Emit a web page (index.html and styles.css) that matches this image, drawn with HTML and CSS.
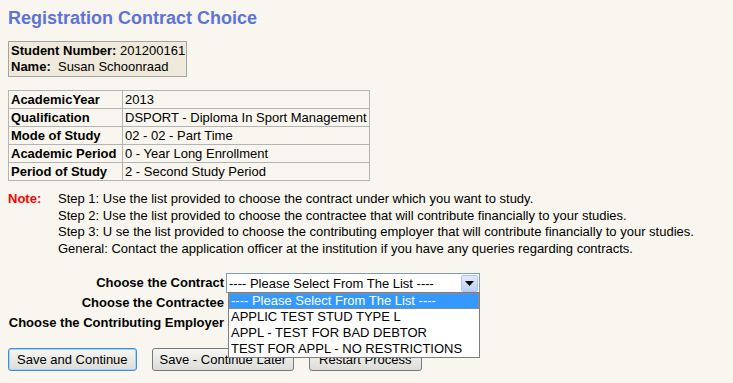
FILE: index.html
```html
<!DOCTYPE html>
<html>
<head>
<meta charset="utf-8">
<link rel="stylesheet" href="styles.css">
</head>
<body>
<h1 class="title">Registration Contract Choice</h1>

<table class="student">
  <tr><td><b>Student Number:</b> 201200161</td></tr>
  <tr><td><b>Name:</b>&nbsp; Susan Schoonraad</td></tr>
</table>

<table class="info">
  <tr><th>AcademicYear</th><td>2013</td></tr>
  <tr><th>Qualification</th><td>DSPORT - Diploma In Sport Management</td></tr>
  <tr><th>Mode of Study</th><td>02 - 02 - Part Time</td></tr>
  <tr><th>Academic Period</th><td>0 - Year Long Enrollment</td></tr>
  <tr><th>Period of Study</th><td>2 - Second Study Period</td></tr>
</table>

<div class="note">
  <div class="note-label">Note:</div>
  <div class="note-text">
    <div>Step 1: Use the list provided to choose the contract under which you want to study.</div>
    <div>Step 2: Use the list provided to choose the contractee that will contribute financially to your studies.</div>
    <div>Step 3: U se the list provided to choose the contributing employer that will contribute financially to your studies.</div>
    <div>General: Contact the application officer at the institution if you have any queries regarding contracts.</div>
  </div>
</div>

<div class="form">
  <div class="label">Choose the Contract</div>
  <div class="field">
    <div class="select">
      <span class="select-text">---- Please Select From The List ----</span>
      <span class="arrow"><svg width="9" height="5" viewBox="0 0 9 5"><path d="M0 0H9L4.5 5Z" fill="#000"/></svg></span>
    </div>
    <div class="dropdown">
      <div class="opt selected">---- Please Select From The List ----</div>
      <div class="opt">APPLIC TEST STUD TYPE L</div>
      <div class="opt">APPL - TEST FOR BAD DEBTOR</div>
      <div class="opt">TEST FOR APPL - NO RESTRICTIONS</div>
    </div>
  </div>
  <div class="label">Choose the Contractee</div>
  <div class="field"></div>
  <div class="label">Choose the Contributing Employer</div>
  <div class="field"></div>
</div>

<div class="buttons">
  <button class="btn primary">Save and Continue</button>
  <button class="btn">Save - Continue Later</button>
  <button class="btn restart">Restart Process</button>
</div>
</body>
</html>
```

FILE: styles.css
```css
html, body {
  margin: 0;
  padding: 0;
}
body {
  background: #f8f6ee;
  font-family: "Liberation Sans", Arial, sans-serif;
  font-size: 13px;
  color: #000;
  padding: 8px;
  width: 717px;
  height: 367px;
  overflow: hidden;
}
.title {
  margin: 0;
  font-size: 18px;
  line-height: 21px;
  font-weight: bold;
  color: #5f72da;
}
.student {
  margin-top: 12px;
  border-collapse: collapse;
  border: 1px solid #a3a3a3;
  background: #efeadc;
  width: 177px;
}
.student td {
  padding: 0 1px 0 2px;
  line-height: 16px;
  white-space: nowrap;
}
.student tr:first-child td { padding-top: 1px; }
.student tr:last-child td { padding-bottom: 1px; }

.info {
  margin-top: 13px;
  border-collapse: collapse;
  border: 1px solid #a8a8a8;
}
.info th, .info td {
  border: 1px solid #b4b4b4;
  padding: 1px 2px;
  line-height: 15px;
  height: 15px;
  text-align: left;
  white-space: nowrap;
}
.info th {
  width: 109px;
  font-weight: bold;
}
.info td {
  width: 242px;
}

.note {
  display: flex;
  margin-top: 10px;
  line-height: 16.5px;
}
.note-label {
  width: 50px;
  color: #f00;
  font-weight: bold;
}
.note-text {
  white-space: nowrap;
}

.form {
  display: grid;
  grid-template-columns: 218px 260px;
  grid-auto-rows: 20px;
  margin-top: 16px;
}
.label {
  text-align: right;
  font-weight: bold;
  padding-right: 2px;
  line-height: 20px;
  white-space: nowrap;
}
.field {
  position: relative;
}
.select {
  position: absolute;
  left: 0;
  top: 0;
  width: 252px;
  height: 18px;
  border: 1px solid #7f9db9;
  background: #fff;
  display: flex;
  align-items: center;
}
.select-text {
  flex: 1;
  padding-left: 2px;
  white-space: nowrap;
}
.arrow {
  width: 15px;
  height: 15px;
  margin-right: 1px;
  border: 1px solid #b0c6f0;
  border-radius: 2px;
  background: linear-gradient(#e2ecfd, #bad0f6);
  display: flex;
  align-items: center;
  justify-content: center;
}
.dropdown {
  position: absolute;
  left: 2px;
  top: 19px;
  width: 250px;
  border: 1px solid #7f7f7f;
  background: #fff;
  z-index: 5;
}
.opt {
  height: 16px;
  line-height: 16px;
  padding-left: 2px;
  white-space: nowrap;
  font-size: 13px;
}
.opt.selected {
  background: #3399ff;
  color: #fff;
  outline: 1px dotted #d08040;
  outline-offset: -1px;
}

.buttons {
  display: flex;
  gap: 15px;
  margin-top: 15px;
}
.btn {
  font-family: "Liberation Sans", Arial, sans-serif;
  font-size: 13px;
  height: 23px;
  padding: 0 7px;
  border: 1px solid #7a7a7a;
  border-radius: 3px;
  background: linear-gradient(#f6f6f4, #dcdcd8);
  color: #000;
}
.btn.primary {
  padding: 0 8px;
  border-color: #3c8ed8;
  box-shadow: inset 0 0 0 1px #a8d2f6;
}
.btn.restart {
  padding: 0 9px;
}
```
